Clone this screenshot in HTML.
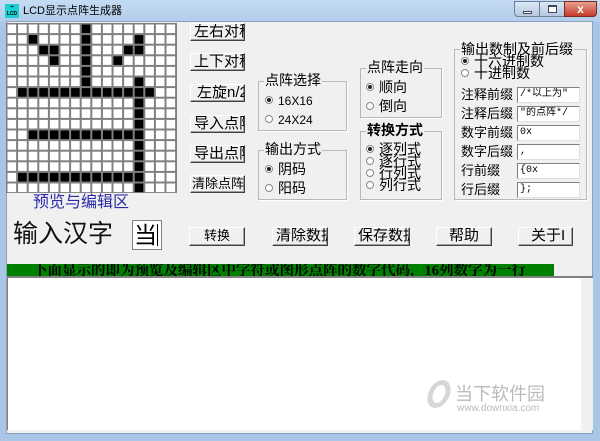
<!DOCTYPE html><html><head><meta charset="utf-8"><style>
*{margin:0;padding:0;box-sizing:border-box}
body{width:600px;height:441px;overflow:hidden;background:#a9c6e6;font-family:"Liberation Sans","Noto Sans CJK SC",sans-serif;position:relative}
.a{position:absolute}
.title{left:0;top:0;width:600px;height:22px;background:linear-gradient(#c4dbf3,#b2cdea)}
.client{left:6px;top:21px;width:587px;height:413px;background:#f0f0f0;border:1px solid #8aa3c0}
.btn{position:absolute;background:#f0f0f0;border:1px solid;border-color:#fff #404040 #404040 #fff;box-shadow:inset -1px -1px 0 #a0a0a0;font-size:15px;white-space:nowrap;overflow:hidden;line-height:16px;padding-left:3px;color:#000}
.grp{position:absolute;border:1px solid #b8b8b8;box-shadow:1px 1px 0 #fff}
.grp>span{position:absolute;top:-9px;left:5px;background:#f0f0f0;font-size:14px;line-height:15px;padding:0 1px}
.rb{position:absolute;font-size:12px;line-height:14px;white-space:nowrap}
.rb i{display:inline-block;width:8px;height:8px;border:1px solid #888;border-radius:50%;margin-right:5px;vertical-align:1px;background:#fff;position:relative}
.rb i.on::after{content:"";position:absolute;left:1px;top:1px;width:4px;height:4px;border-radius:50%;background:#222}
.lbl{position:absolute;font-size:13px;line-height:14px;white-space:nowrap}
.tb{position:absolute;left:517px;width:63px;height:16px;background:#fff;border:1px solid #a0a0a0;border-color:#808080 #e0e0e0 #e0e0e0 #808080;font-size:10px;line-height:13px;padding-left:2px;white-space:nowrap;overflow:hidden;font-family:"Liberation Mono","Noto Sans CJK SC",monospace}
</style></head><body>
<div class="a title"></div>
<div class="a" style="left:5px;top:4px;width:14px;height:14px;background:#1ad0d0;font-size:5px;line-height:7px;color:#000;text-align:center;font-weight:bold">▪▪<br>LCD</div>
<div class="a" style="left:23px;top:4px;font-size:11px;line-height:14px;color:#000">LCD显示点阵生成器</div>
<div class="a" style="left:514px;top:1px;width:26px;height:16px;border:1px solid #6a7f99;border-radius:0 0 0 4px;background:linear-gradient(#dce8f5,#b5c8df)"><div class="a" style="left:8px;top:9px;width:9px;height:3px;background:#fff;border:1px solid #445"></div></div>
<div class="a" style="left:539px;top:1px;width:26px;height:16px;border:1px solid #6a7f99;background:linear-gradient(#dce8f5,#b5c8df)"><div class="a" style="left:8px;top:3px;width:9px;height:8px;border:1px solid #445;border-top-width:2px;background:#fff"></div></div>
<div class="a" style="left:564px;top:1px;width:33px;height:16px;border:1px solid #7a2a20;border-radius:0 0 4px 0;background:linear-gradient(#e8a090,#c43c28);color:#fff;font-size:12px;font-weight:bold;text-align:center;line-height:14px">x</div>
<div class="a client"></div>
<svg class="a" style="left:6px;top:23px" width="171" height="170" viewBox="0 0 171 170" id="g"></svg>
<div class="a" style="left:33px;top:193px;font-size:16px;color:#2a2aa8;line-height:20px">预览与编辑区</div>
<div class="a" style="left:13px;top:218px;font-size:25px;line-height:32px;color:#111">输入汉字</div>
<div class="a" style="left:132px;top:220px;width:30px;height:30px;background:#fff;border:1px solid #808080;font-size:23px;line-height:28px;padding-left:1px">当<span style="display:inline-block;width:1px;height:22px;background:#000;vertical-align:-3px"></span></div>
<div class="btn" style="left:190px;top:23px;width:55px;height:18px">左右对称</div>
<div class="btn" style="left:190px;top:53px;width:55px;height:18px">上下对称</div>
<div class="btn" style="left:190px;top:84px;width:55px;height:18px;padding-left:6px">左旋n/2</div>
<div class="btn" style="left:190px;top:115px;width:55px;height:18px">导入点阵</div>
<div class="btn" style="left:190px;top:145px;width:55px;height:18px">导出点阵</div>
<div class="btn" style="left:190px;top:175px;width:55px;height:18px;font-size:13px;padding-left:1px">清除点阵</div>
<div class="grp" style="left:258px;top:81px;width:89px;height:50px"><span>点阵选择</span></div>
<div class="rb" style="left:265px;top:94px"><i class="on"></i>16X16</div>
<div class="rb" style="left:265px;top:113px"><i></i>24X24</div>
<div class="grp" style="left:258px;top:150px;width:89px;height:50px"><span>输出方式</span></div>
<div class="rb" style="left:265px;top:162px;font-size:14px"><i class="on"></i>阴码</div>
<div class="rb" style="left:265px;top:181px;font-size:14px"><i></i>阳码</div>
<div class="grp" style="left:360px;top:68px;width:82px;height:50px"><span>点阵走向</span></div>
<div class="rb" style="left:366px;top:80px;font-size:14px"><i class="on"></i>顺向</div>
<div class="rb" style="left:366px;top:99px;font-size:14px"><i></i>倒向</div>
<div class="grp" style="left:360px;top:131px;width:82px;height:69px"><span style="font-weight:bold">转换方式</span></div>
<div class="rb" style="left:366px;top:143px;font-size:14px;line-height:12px"><i class="on"></i>逐列式<br><i></i>逐行式<br><i></i>行列式<br><i></i>列行式</div>
<div class="grp" style="left:454px;top:49px;width:133px;height:151px"><span style="top:-8px">输出数制及前后缀</span></div>
<div class="rb" style="left:461px;top:55px;font-size:14px;line-height:12px"><i class="on"></i>十六进制数<br><i></i>十进制数</div>
<div class="lbl" style="left:461px;top:88px">注释前缀</div><div class="tb" style="top:87px">/*以上为"</div>
<div class="lbl" style="left:461px;top:107px">注释后缀</div><div class="tb" style="top:106px">"的点阵*/</div>
<div class="lbl" style="left:461px;top:126px">数字前缀</div><div class="tb" style="top:125px">0x</div>
<div class="lbl" style="left:461px;top:145px">数字后缀</div><div class="tb" style="top:144px">,</div>
<div class="lbl" style="left:461px;top:164px">行前缀</div><div class="tb" style="top:163px">{0x</div>
<div class="lbl" style="left:461px;top:183px">行后缀</div><div class="tb" style="top:182px">};</div>
<div class="btn" style="left:189px;top:227px;width:56px;height:19px;text-align:center;padding:0;font-size:13px">转换</div>
<div class="btn" style="left:272px;top:227px;width:56px;height:19px">清除数据</div>
<div class="btn" style="left:354px;top:227px;width:56px;height:19px">保存数据</div>
<div class="btn" style="left:436px;top:227px;width:56px;height:19px;text-align:center;padding:0">帮助</div>
<div class="btn" style="left:518px;top:227px;width:55px;height:19px;padding-left:12px">关于I</div>
<div class="a" style="left:7px;top:264px;width:547px;height:12px;background:#008000;overflow:hidden;font-size:14.5px;line-height:14px;font-weight:bold;color:#000;white-space:nowrap;padding-left:26px;font-family:'Liberation Serif','Noto Serif CJK SC',serif">下面显示的即为预览及编辑区中字符或图形点阵的数字代码，16列数字为一行</div>
<div class="a" style="left:7px;top:276px;width:586px;height:154px;background:#fff;border-top:2px solid #808080;border-left:1px solid #808080"></div>
<div class="a" style="left:581px;top:278px;width:12px;height:152px;background:#f0f0f0"></div>
<div class="a" style="left:455px;top:380px;font-size:18px;color:#bbb">当下软件园</div>
<div class="a" style="left:457px;top:403px;font-size:10px;color:#bbb">www.downxia.com</div>
<div class="a" style="left:428px;top:380px;width:22px;height:28px;border:5px solid #ccc;border-radius:50%;transform:skewX(-15deg);opacity:.8"></div>
<script>
var s='',c=10.6,on={0:[7],1:[2,7,12],2:[3,4,7,11,12],3:[4,7,10],4:[7],5:[7,12],6:[1,2,3,4,5,6,7,8,9,10,11,12,13],7:[12],8:[12],9:[12],10:[2,3,4,5,6,7,8,9,10,11,12],11:[12],12:[12],13:[12],14:[1,2,3,4,5,6,7,8,9,10,11,12],15:[12]};
s+='<rect width="171" height="170" fill="#808080"/>';
for(var r=0;r<16;r++)for(var k=0;k<16;k++){var b=on[r].indexOf(k)>=0;s+='<rect x="'+(k*c+1.5).toFixed(1)+'" y="'+(r*c+1.5).toFixed(1)+'" width="8.6" height="8.6" fill="'+(b?'#000':'#fff')+'"/>';}
document.getElementById('g').innerHTML=s;
</script>
</body></html>
